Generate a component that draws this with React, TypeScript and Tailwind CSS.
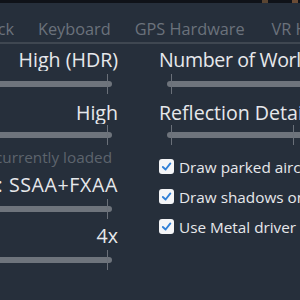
import React from 'react';

const Slider = () => (
  <div className="relative h-[20px] w-[112px] flex items-center">
    <div className="h-[6px] w-full rounded-r-full bg-[#6e747c]" />
    <div className="absolute right-[4px] top-0 h-full w-px bg-[#6a7079]" />
  </div>
);

const RightSlider = ({ ticks }: { ticks: number[] }) => (
  <div className="relative h-[20px] ml-[8px] w-[140px] flex items-center">
    <div className="h-[6px] w-full rounded-l-full bg-[#6e747c]" />
    {ticks.map((t) => (
      <div key={t} className="absolute top-0 h-full w-px bg-[#6a7079]" style={{ left: t }} />
    ))}
  </div>
);

const Check = ({ label }: { label: string }) => (
  <div className="h-[30px] flex items-center gap-[5px] whitespace-nowrap">
    <div className="w-[15px] h-[15px] shrink-0 rounded-[3px] bg-[#f4f5f7] flex items-center justify-center">
      <svg width="11" height="11" viewBox="0 0 12 12">
        <path d="M2 6.5 L5 9.3 L10.2 2.6" fill="none" stroke="#2f7fd6" strokeWidth="2" strokeLinecap="round" strokeLinejoin="round" />
      </svg>
    </div>
    <span className="mt-[1px] text-[15.3px] leading-[20px] text-[#e6e8eb]">{label}</span>
  </div>
);

const Value = ({ text, mt, wide }: { text: string; mt: string; wide?: boolean }) => (
  <div
    className={`${mt} h-[22px] flex justify-end overflow-hidden whitespace-nowrap text-[19.6px] leading-[22px] text-[#e6e8eb] ${
      wide ? 'tracking-[0.6px]' : ''
    }`}
  >
    {text}
  </div>
);

export default function App() {
  return (
    <div className="w-[300px] h-[300px] overflow-hidden bg-[#262f3b] font-['Open_Sans',sans-serif]">
      {/* top strip */}
      <div className="h-[3px] flex bg-[#0f1218]">
        <div className="w-[262px]" />
        <div className="w-[6px] bg-[#5a4532]" />
        <div className="w-[24px]" />
        <div className="w-[6px] bg-[#6b4c36]" />
      </div>

      {/* tabs */}
      <div className="h-[39px] pt-[16px] flex gap-[24px] whitespace-nowrap text-[16.3px] leading-[20px] text-[#6b727c]">
        <div className="w-[14px] shrink-0 flex justify-end overflow-hidden">Joystick</div>
        <span>Keyboard</span>
        <span>GPS Hardware</span>
        <span className="ml-[3px]">VR Hardware</span>
      </div>
      <div className="h-[2px] bg-[#3f4751]" />

      <div className="flex">
        {/* left column */}
        <div className="w-[118px] shrink-0 flex flex-col">
          <Value text="High (HDR)" mt="mt-[5px]" />
          <div className="mt-[3px]"><Slider /></div>
          <Value text="High" mt="mt-[8px]" />
          <div className="mt-[1px]"><Slider /></div>
          <div className="mt-[2px] pr-[6px] h-[20px] flex justify-end overflow-hidden whitespace-nowrap text-[15.3px] leading-[20px] text-[#5d646d]">
            Changes will not affect aircraft currently loaded
          </div>
          <Value text="Current: SSAA+FXAA" mt="mt-[7px]" wide />
          <div className="mt-[3px]"><Slider /></div>
          <Value text="4x" mt="mt-[6px]" />
          <div className="mt-[3px]"><Slider /></div>
        </div>

        {/* right column */}
        <div className="ml-[41px] flex-1 overflow-hidden flex flex-col">
          <div className="mt-[5px] h-[22px] whitespace-nowrap text-[19.6px] leading-[22px] tracking-[-0.4px] text-[#e6e8eb]">Number of World Objects</div>
          <div className="mt-[3px]"><RightSlider ticks={[4]} /></div>
          <div className="mt-[8px] h-[22px] whitespace-nowrap text-[19.6px] leading-[22px] text-[#e6e8eb]">Reflection Detail</div>
          <div className="mt-[1px]"><RightSlider ticks={[4, 126]} /></div>
          <div className="mt-[6px] flex flex-col">
            <Check label="Draw parked aircraft" />
            <Check label="Draw shadows on scenery" />
            <Check label="Use Metal driver" />
          </div>
        </div>
      </div>
    </div>
  );
}
